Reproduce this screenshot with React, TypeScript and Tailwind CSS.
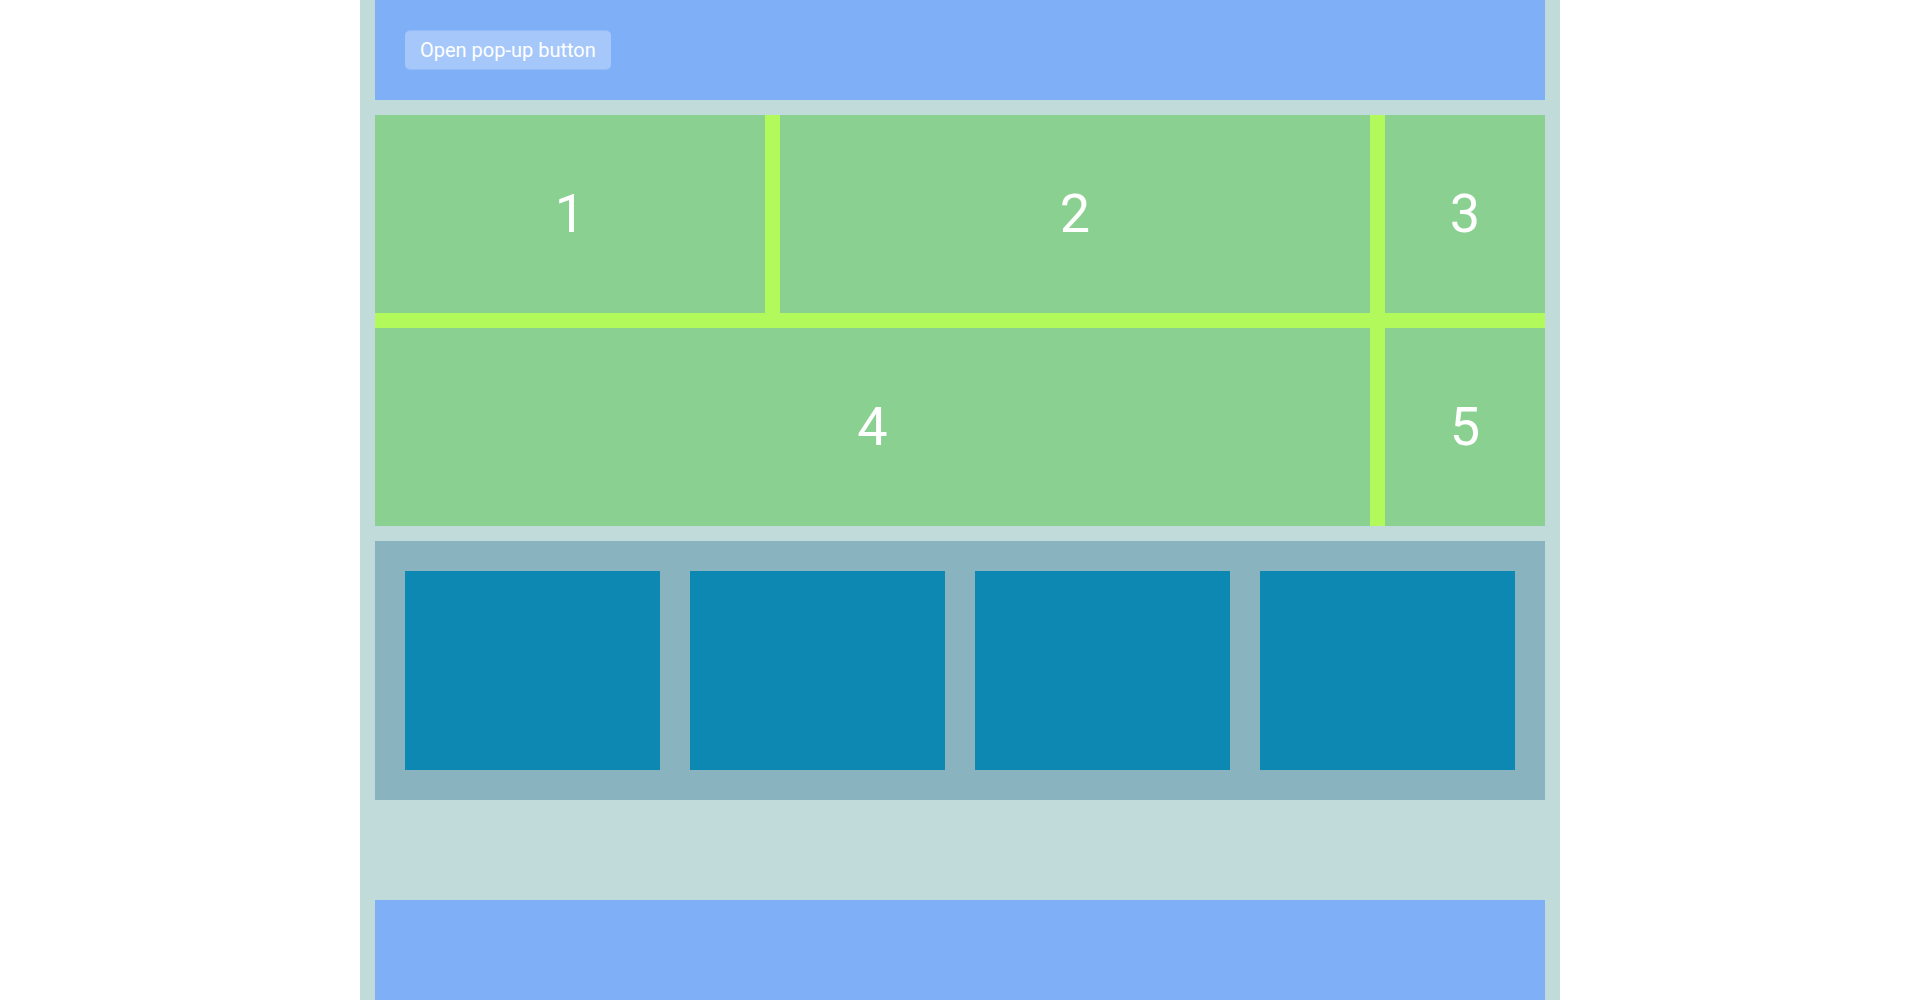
const panel = 'flex items-center justify-center bg-[#8ad091]';

export default function App() {
  return (
    <div className="mx-auto flex min-h-screen max-w-[1200px] flex-col justify-between bg-[#c1dbdb] px-[15px] font-[Roboto,sans-serif] text-white">
      <div>
        <header className="flex h-[100px] items-center bg-[#7faff7] px-[30px]">
          <button type="button" className="rounded-[5px] border-y border-white/15 bg-white/30 bg-clip-padding px-[15px] py-[9px] text-[20px] leading-5">
            Open pop-up button
          </button>
        </header>
        <main>
          <section className="my-[15px] grid grid-cols-[390px_1fr_160px] grid-rows-[198px_198px] gap-[15px] bg-[#b2f95b] text-[54px] leading-none">
            <div className={panel}>1</div>
            <div className={panel}>2</div>
            <div className={panel}>3</div>
            <div className={`${panel} col-span-2`}>4</div>
            <div className={panel}>5</div>
          </section>
          <section className="grid grid-cols-4 gap-[30px] bg-[#8ab3c0] p-[30px]">
            {[0, 1, 2, 3].map((tile) => (
              <div key={tile} className="h-[199px] bg-[#0d88b2]" />
            ))}
          </section>
        </main>
      </div>
      <footer className="h-[100px] bg-[#7faff7]" />
    </div>
  );
}
